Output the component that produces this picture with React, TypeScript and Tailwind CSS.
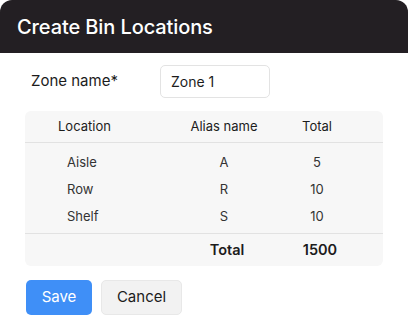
const ROWS = [
  { loc: "Aisle", alias: "A", total: "5" },
  { loc: "Row", alias: "R", total: "10" },
  { loc: "Shelf", alias: "S", total: "10" },
];

export default function App() {
  return (
    <div className="w-[408px] h-[328px] bg-white font-['Inter',sans-serif] text-[#1c1c1c] overflow-hidden">
      <div className="h-[53px] bg-[#231f23] rounded-t-[12px] flex items-center px-[17px]">
        <h1 className="text-[20px] font-medium text-white tracking-[-0.1px]">Create Bin Locations</h1>
      </div>

      <div className="flex items-center mt-[12px] h-[33px]">
        <span className="w-[160px] pl-[31px] text-[15px]">Zone name*</span>
        <div className="w-[110px] h-[33px] border border-[#e3e3e3] rounded-[5px] flex items-center px-[10px] text-[14px]">
          Zone 1
        </div>
      </div>

      <div className="mx-[25px] mt-[13px] w-[358px] bg-[#f7f7f7] rounded-[6px] text-[13px]">
        <div className="flex items-center h-[32px] border-b border-[#e2e2e2]">
          <span className="w-[140px] pl-[33px]">Location</span>
          <span className="w-[118px] text-center">Alias name</span>
          <span className="w-[68px] text-center">Total</span>
        </div>
        <div className="pt-[6px] pb-[3px] text-[#333]">
          {ROWS.map((r) => (
            <div key={r.loc} className="flex items-center h-[27px]">
              <span className="w-[140px] pl-[42px]">{r.loc}</span>
              <span className="w-[118px] text-center">{r.alias}</span>
              <span className="w-[68px] text-center">{r.total}</span>
            </div>
          ))}
        </div>
        <div className="flex items-center h-[33px] border-t border-[#e2e2e2] font-semibold text-[14.5px]">
          <span className="w-[143px]" />
          <span className="w-[118px] text-center">Total</span>
          <span className="w-[68px] text-center">1500</span>
        </div>
      </div>

      <div className="flex gap-[9px] mx-[26px] mt-[14px]">
        <button className="w-[66px] h-[35px] rounded-[5px] bg-[#3f8ff7] text-white text-[15px]">Save</button>
        <button className="w-[81px] h-[35px] rounded-[5px] bg-[#f2f2f2] border border-[#e8e8e8] text-[15px]">Cancel</button>
      </div>
    </div>
  );
}
